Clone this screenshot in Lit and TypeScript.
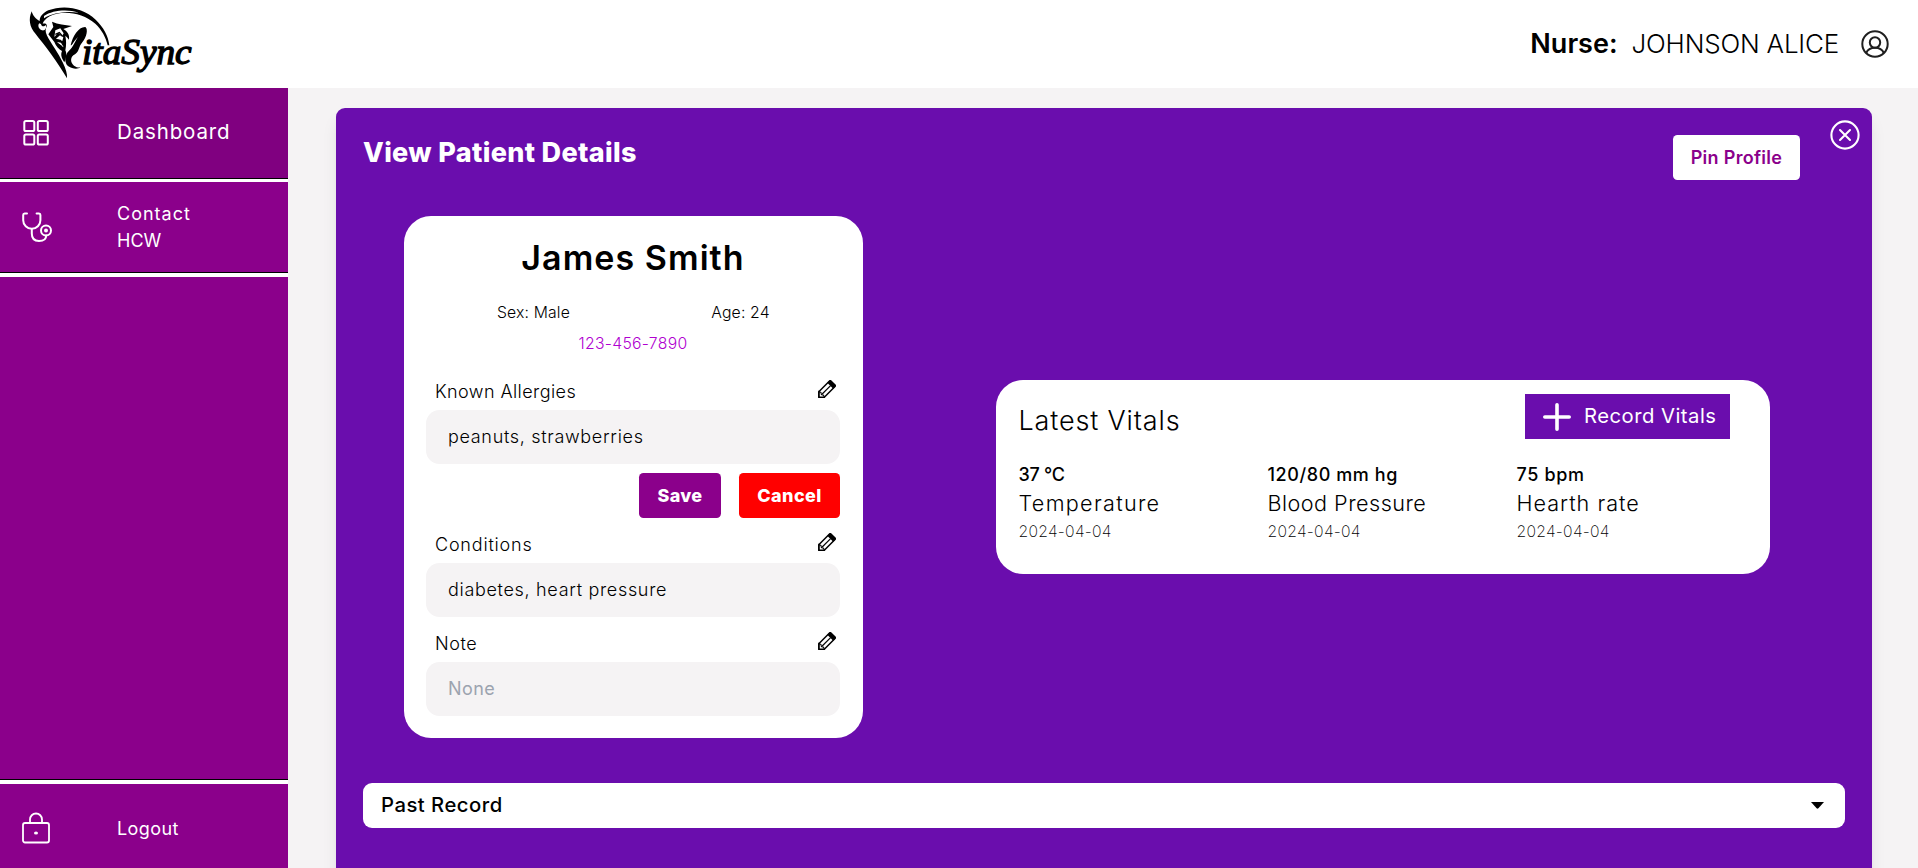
import { LitElement, html, css, svg } from "lit";
import { customElement, property } from "lit/decorators.js";

const logo = html`<svg class="logo" viewBox="0 0 600 264" width="200" height="88" role="img" aria-label="VitaSync">
  <path d="M95 34 C98 47 108 58 119 63 C119 50 128 39 145 31 C188 14 248 21 287 59 C311 82 325 108 328 136 L323 136 C318 112 305 89 286 71 C247 36 184 29 149 49 C137 56 130 64 128 71 C138 68 144 74 138 84 C135 92 138 103 146 116 C158 136 174 158 188 187 C198 207 202 222 201 235 C190 216 174 191 153 162 C135 137 119 118 107 102 C88 81 85 57 95 34Z"/>
  <path d="M118 70 C112 76 116 88 126 91 C136 93 141 83 137 75 C133 81 124 80 123 72Z" fill="#fff"/>
  <path d="M132 48 C157 31 202 27 236 38 C197 33 157 39 132 55Z" fill="#fff"/>
  <path d="M156 65 C175 73 194 75 216 78 L190 87 C203 94 209 105 207 119 C203 114 200 110 196 107 C199 122 199 136 196 151 C202 163 198 175 193 187 C185 174 181 165 186 153 C177 148 168 139 163 126 L145 103 L160 81Z"/>
  <path d="M166 91 L181 85 L191 100 L187 107 L174 99 L163 111Z M168 116 L180 106 L190 112 L187 123Z M171 126 L188 129 L190 142Z" fill="#fff"/>
  <path d="M166 103 L178 98 L187 108 M166 119 L181 121 L190 136 M175 134 L184 138" fill="none" stroke="#000" stroke-width="4"/>
  <path d="M212 136 C218 108 236 80 256 81 C265 87 260 112 247 127 C235 140 239 154 225 163 C210 170 210 188 222 197 C229 202 237 203 241 202 C233 209 217 207 205 199 C192 188 193 166 207 152 C220 141 224 126 234 111 C221 123 217 137 212 136Z"/>
  <text class="logo-text" x="246" y="192" textLength="329" lengthAdjust="spacingAndGlyphs">itaSync</text>
</svg>`;

const icons: Record<string, unknown> = {
  grid: svg`<g fill="none" stroke="#fff" stroke-width="2"><rect x="6.300" y="6" width="10" height="10" rx="1.600"/><rect x="19.800" y="6" width="10" height="10" rx="1.600"/><rect x="6.300" y="19.500" width="10" height="10" rx="1.600"/><rect x="19.800" y="19.500" width="10" height="10" rx="1.600"/></g>`,
  stethoscope: svg`<g fill="none" stroke="#fff" stroke-width="2" stroke-linecap="round" stroke-linejoin="round"><path d="M9 4.500 H6.600 Q5.200 4.500 5.200 6 V11.200 A8.600 8.600 0 0 0 22.400 11.200 V6 Q22.400 4.500 21 4.500 H18.600"/><path d="M13.800 20 V24.500 Q13.800 32 21 32 Q28.200 32 28.200 26.500"/><circle cx="28" cy="21.500" r="5"/></g><circle cx="28" cy="21.500" r="2" fill="#fff"/>`,
  lock: svg`<g fill="none" stroke="#fff" stroke-width="1.800"><rect x="5" y="12" width="26" height="19.500" rx="2"/><path d="M12 12 V8.500 A6 6 0 0 1 24 8.500 V12"/></g><ellipse cx="18" cy="22" rx="2" ry="1.600" fill="#fff"/>`,
};

const userIcon = html`<svg width="28" height="28" viewBox="0 0 28 28" fill="none" stroke="#1f1f1f" stroke-width="2">
  <circle cx="14" cy="14" r="12.700"/><circle cx="14" cy="12.500" r="5.200"/><path d="M5.200 23 C6.600 19.700 9.800 17.800 14 17.800 C18.200 17.800 21.400 19.700 22.800 23"/>
</svg>`;

const closeIcon = html`<svg width="30" height="30" viewBox="0 0 30 30" fill="none" stroke="#fff" stroke-width="2.100" stroke-linecap="round">
  <circle cx="15" cy="15" r="13.600"/><path d="M10 10 L20 20 M20 10 L10 20"/>
</svg>`;

const pencilIcon = html`<svg class="pencil" width="18" height="18" viewBox="0 0 18 18">
  <path d="M.800 11.700 L11.500 1 Q12.200 .3 12.900 1 L17 5.100 Q17.700 5.800 17 6.500 L6.300 17.200 L.8 17.300Z" fill="#fff" stroke="#000" stroke-width="1.500" stroke-linejoin="round"/>
  <path d="M9.300 2.800 L11.300 .8 Q12.200 0 13.100 .8 L17.200 4.900 Q18 5.800 17.200 6.700 L15.200 8.700Z"/>
  <path d="M12.600 5.600 L4.200 14" stroke="#000" stroke-width="1.200"/>
  <path d="M1 11.500 L3 12.500 L3.400 14.600 L5.500 15.100 L6.400 17.200 L1 17.500Z" fill="none" stroke="#000" stroke-width="1.100"/>
</svg>`;

@customElement("app-sidebar-item")
class SidebarItem extends LitElement {
  @property() icon = "";
  @property({ type: Boolean, reflect: true }) active = false;
  static styles = css`
    :host { display: flex; align-items: center; height: 90px; flex: none; background: #8b008b; color: #fff; }
    :host([active]) { background: #800080; }
    svg { margin-left: 18px; width: 36px; height: 36px; flex: none; }
    .label { margin-left: 63px; }
  `;
  render() {
    return html`<svg viewBox="0 0 36 36">${icons[this.icon]}</svg><div class="label"><slot></slot></div>`;
  }
}

@customElement("app-field")
class Field extends LitElement {
  @property() label = "";
  @property() value = "";
  @property() kind = "";
  static styles = css`
    :host { display: block; margin-top: 8px; }
    .head { display: flex; align-items: center; justify-content: space-between; height: 37px; padding: 0 4px 0 9px; }
    .pencil { margin-bottom: 5px; }
    .label { font-weight: 300; }
    .allergies .label { letter-spacing: .42px; }
    .conditions .label { letter-spacing: .8px; }
    .note .label { letter-spacing: .6px; }
    .box { box-sizing: border-box; display: flex; align-items: center; height: 54px; padding: 0 0 2px 22px; border-radius: 13.5px; background: #f5f3f4; font-weight: 300; letter-spacing: .68px; }
    .note .box { color: #9ca3af; font-weight: 400; letter-spacing: .4px; }
  `;
  render() {
    return html`<div class=${this.kind}>
      <div class="head"><span class="label">${this.label}</span>${pencilIcon}</div>
      <div class="box">${this.value}</div>
    </div>`;
  }
}

@customElement("app-root")
class AppRoot extends LitElement {
  static styles = css`
    :host { display: flex; flex-direction: column; height: 100vh; overflow: hidden; background: #fff; color: #000; font-family: Inter, sans-serif; font-size: 18px; line-height: 27px; }
    * { box-sizing: border-box; }
    svg { display: block; flex: none; }
    .topbar { display: flex; align-items: center; justify-content: space-between; height: 88px; flex: none; padding-right: 29px; }
    .logo-text { font: italic 400 108px "Liberation Serif", serif; stroke: #000; stroke-width: 4px; }
    .user { display: flex; align-items: center; font-size: 27px; height: 86px; }
    .role, .name { margin-bottom: 2px; }
    .role { font-weight: 600; }
    .name { font-weight: 300; font-size: 26px; letter-spacing: -.2px; margin-left: 14px; margin-right: 22px; }
    .main { display: flex; flex: 1; min-height: 0; background: #f5f3f4; }
    .side { display: flex; flex-direction: column; width: 288px; flex: none; overflow: hidden; }
    .rule { flex: none; height: 5px; border-top: 1px solid #000; background: #fff; }
    .rule.thin { height: 4px; }
    .fill { flex: none; height: 502px; background: #8b008b; }
    .dash { font-size: 20.5px; letter-spacing: .85px; margin-bottom: 3px; }
    .contact { letter-spacing: 1px; }
    .hcw { letter-spacing: 0; }
    .logout { letter-spacing: .4px; margin-bottom: 1px; }
    .panel { width: 1536px; height: 900px; flex: none; margin: 20px 0 0 48px; border-radius: 9px; background: #6a0dad; box-shadow: 0 11px 17px -3px rgba(0,0,0,.1), 0 4px 7px -4px rgba(0,0,0,.1); }
    .panel-head { display: flex; align-items: flex-start; height: 108px; padding: 12px 12px 0 27px; }
    h1 { margin: 13px auto 0 0; color: #fff; font-size: 27px; line-height: 40px; font-weight: 800; letter-spacing: .35px; }
    .btn { display: flex; align-items: center; justify-content: center; height: 45px; border-radius: 4.5px; color: #fff; font-weight: 800; }
    .pin { width: 127px; margin: 15px 30px 0 0; background: #fff; color: #8b008b; font-weight: 600; letter-spacing: .3px; }
    .cards { display: flex; align-items: center; padding-left: 68px; gap: 133px; }
    .patient { width: 459px; height: 522px; padding: 19px 23px 22px 22px; border-radius: 27px; background: #fff; }
    h2 { margin: 0; text-align: center; font-size: 34px; line-height: 46px; font-weight: 600; letter-spacing: 1.05px; }
    .meta { display: grid; grid-template-columns: 1fr 1fr; margin: 20px 0 0 2px; text-align: center; font-size: 15.75px; line-height: 24px; font-weight: 300; letter-spacing: .15px; }
    .meta span { padding-left: 5px; }
    .meta span:last-child { padding-left: 7px; }
    .phone { margin: 7px 0 17px; text-align: center; color: #b000d0; font-size: 15.75px; line-height: 24px; font-weight: 300; letter-spacing: .28px; }
    .first { margin-top: 0; }
    .actions { display: flex; justify-content: flex-end; gap: 18px; margin-top: 9px; }
    .save { width: 82px; background: #8b008b; letter-spacing: .3px; }
    .cancel { width: 101px; background: #f00; letter-spacing: .45px; }
    .vitals { width: 774px; height: 194px; padding: 14px 0 0 22.5px; border-radius: 27px; background: #fff; }
    .vitals-head { display: flex; justify-content: space-between; height: 67px; padding-right: 40px; }
    h3 { margin: 7px 0 0; font-size: 27px; line-height: 40px; font-weight: 300; letter-spacing: .85px; }
    .record { width: 205px; justify-content: flex-start; border-radius: 0; background: #6a0dad; font-size: 20.25px; font-weight: 400; letter-spacing: .48px; padding: 0 0 0 18px; gap: 13px; }
    .record span { margin-bottom: 2px; }
    .grid { display: grid; grid-template-columns: repeat(3, 249px); }
    .value { font-weight: 500; }
    .kind { font-size: 21.6px; line-height: 30px; font-weight: 300; }
    .date { font-size: 15.75px; line-height: 27px; font-weight: 200; letter-spacing: .25px; }
    .temp .value { letter-spacing: -.3px; }
    .temp .kind { letter-spacing: 1.3px; }
    .blood .value { letter-spacing: .6px; }
    .blood .kind { letter-spacing: .48px; }
    .heart .value { letter-spacing: .65px; }
    .heart .kind { letter-spacing: 1px; }
    .past { display: flex; align-items: center; justify-content: space-between; height: 45px; margin: 45px 27px 0; padding: 0 21px 0 18px; border-radius: 9px; background: #fff; font-size: 20.25px; font-weight: 500; letter-spacing: .5px; }
    .past span { margin-bottom: 2px; }
  `;

  private vital(kind: string, value: string, name: string) {
    return html`<div class=${kind}>
      <div class="value">${value}</div>
      <div class="kind">${name}</div>
      <div class="date">2024-04-04</div>
    </div>`;
  }

  render() {
    return html`
      <div class="topbar">
        ${logo}
        <div class="user"><span class="role">Nurse:</span><span class="name">JOHNSON ALICE</span>${userIcon}</div>
      </div>
      <div class="main">
        <div class="side">
          <app-sidebar-item icon="grid" active><div class="dash">Dashboard</div></app-sidebar-item>
          <div class="rule thin"></div>
          <app-sidebar-item icon="stethoscope"><div class="contact">Contact</div><div class="hcw">HCW</div></app-sidebar-item>
          <div class="rule"></div>
          <div class="fill"></div>
          <div class="rule"></div>
          <app-sidebar-item icon="lock"><div class="logout">Logout</div></app-sidebar-item>
        </div>
        <div class="panel">
          <div class="panel-head">
            <h1>View Patient Details</h1>
            <div class="btn pin">Pin Profile</div>
            ${closeIcon}
          </div>
          <div class="cards">
            <div class="patient">
              <h2>James Smith</h2>
              <div class="meta"><span>Sex: Male</span><span>Age: 24</span></div>
              <div class="phone">123-456-7890</div>
              <app-field class="first" kind="allergies" label="Known Allergies" value="peanuts, strawberries"></app-field>
              <div class="actions"><div class="btn save">Save</div><div class="btn cancel">Cancel</div></div>
              <app-field kind="conditions" label="Conditions" value="diabetes, heart pressure"></app-field>
              <app-field kind="note" label="Note" value="None"></app-field>
            </div>
            <div class="vitals">
              <div class="vitals-head">
                <h3>Latest Vitals</h3>
                <div class="btn record">
                  <svg width="28" height="28" viewBox="0 0 28 28" stroke="#fff" stroke-width="3.600" stroke-linecap="round"><path d="M14 1.800 V26.200 M1.800 14 H26.200"/></svg>
                  <span>Record Vitals</span>
                </div>
              </div>
              <div class="grid">
                ${this.vital("temp", "37 °C", "Temperature")}
                ${this.vital("blood", "120/80 mm hg", "Blood Pressure")}
                ${this.vital("heart", "75 bpm", "Hearth rate")}
              </div>
            </div>
          </div>
          <div class="past"><span>Past Record</span>
            <svg width="13" height="7" viewBox="0 0 13 7"><path d="M0 0 H13 L7.400 6.300 Q6.500 7.200 5.600 6.300Z"/></svg>
          </div>
        </div>
      </div>`;
  }
}
